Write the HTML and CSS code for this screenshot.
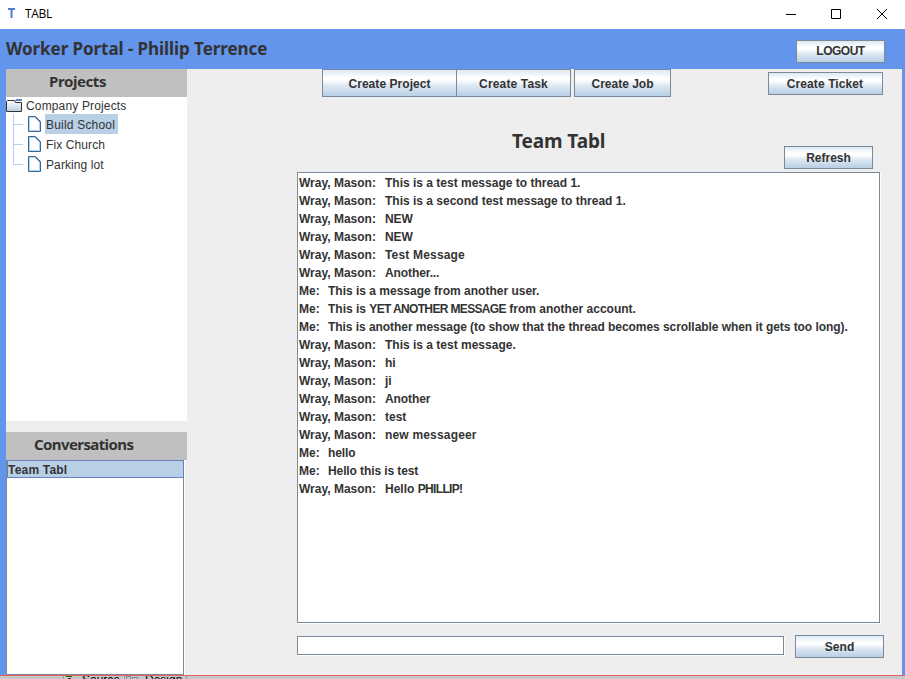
FILE: index.html
```html
<!DOCTYPE html>
<html lang="en">
<head>
<meta charset="utf-8">
<title>TABL</title>
<link rel="stylesheet" href="styles.css">
</head>
<body>
<div class="titlebar">
  <svg class="app-icon" width="8" height="11" viewBox="0 0 8 11"><path d="M0 1h7M3.500 1v9" stroke="#4f7ed0" stroke-width="2"/></svg>
  <span class="app-name">TABL</span>
  <svg class="window-controls" width="104" height="12" viewBox="0 0 104 12" fill="none" stroke="#000"><path d="M2 6.500h10M47.500 1.500h9v9h-9zM93 1l10 10M103 1l-10 10"/></svg>
</div>
<div class="window">
  <header class="header"><h1><span>Worker Portal - Phillip Terrence</span></h1><button class="btn logout">LOGOUT</button></header>
  <div class="body">
    <aside class="sidebar">
      <h2 class="projects-title"><span>Projects</span></h2>
      <div class="tree">
        <div class="root"><svg width="17" height="13" viewBox="0 0 17 13"><defs><linearGradient id="fold" x2="0" y2="1"><stop stop-color="#fff"/><stop offset="1" stop-color="#b8cfe5"/></linearGradient></defs><path d="M.5 12.500V2.500l1-1h7l1 2h6v9z" fill="url(#fold)" stroke="#333"/><path d="M10 0h6v2H9z" fill="#6382bf"/></svg><span>Company Projects</span></div>
        <div class="leaf selected"><i></i><svg width="13" height="16" viewBox="0 0 13 16"><use href="#page"/></svg><span>Build School</span></div>
        <div class="leaf"><i></i><svg width="13" height="16" viewBox="0 0 13 16"><use href="#page"/></svg><span>Fix Church</span></div>
        <div class="leaf last"><i></i><svg width="13" height="16" viewBox="0 0 13 16"><defs><g id="page"><path d="M.5.500h7l5 5v10H.5z" fill="#fff" stroke="#336699"/><path d="M1.500 14.500V1.500h5M1.500 14.500h10V6" fill="none" stroke="#b8cfe5"/><path d="M7.500 1v1h1v1h1v1h1v1h1v1" fill="none" stroke="#6382bf"/></g></defs><use href="#page"/></svg><span>Parking lot</span></div>
      </div>
      <h2 class="conv-title"><span>Conversations</span></h2>
      <div class="conv-list"><div class="conv">Team Tabl</div></div>
    </aside>
    <main class="main">
      <nav class="toolbar"><button class="btn project">Create Project</button><button class="btn task">Create Task</button><button class="btn job">Create Job</button><button class="btn ticket">Create Ticket</button></nav>
      <div class="thread-head"><h3><span>Team Tabl</span></h3><button class="btn refresh">Refresh</button></div>
      <div class="thread">
        <p><b>Wray, Mason:</b><span>This is a test message to thread 1.</span></p>
        <p><b>Wray, Mason:</b><span>This is a second test message to thread 1.</span></p>
        <p><b>Wray, Mason:</b><span class="tight">NEW</span></p>
        <p><b>Wray, Mason:</b><span class="tight">NEW</span></p>
        <p><b>Wray, Mason:</b><span class="loose">Test Message</span></p>
        <p><b>Wray, Mason:</b><span class="tight">Another...</span></p>
        <p class="me"><b>Me:</b><span>This is a message from another user.</span></p>
        <p class="me"><b>Me:</b><span>This is <span class="caps">YET ANOTHER MESSAGE</span> from another account.</span></p>
        <p class="me"><b>Me:</b><span class="long">This is another message (to show that the thread becomes scrollable when it gets too long).</span></p>
        <p><b>Wray, Mason:</b><span>This is a test message.</span></p>
        <p><b>Wray, Mason:</b><span>hi</span></p>
        <p><b>Wray, Mason:</b><span>ji</span></p>
        <p><b>Wray, Mason:</b><span class="tight">Another</span></p>
        <p><b>Wray, Mason:</b><span>test</span></p>
        <p><b>Wray, Mason:</b><span class="loose">new messageer</span></p>
        <p class="me"><b>Me:</b><span class="tight">hello</span></p>
        <p class="me"><b>Me:</b><span class="tight">Hello this is test</span></p>
        <p><b>Wray, Mason:</b><span>Hello <span class="caps">PHILLIP!</span></span></p>
      </div>
      <form class="composer"><input type="text" aria-label="Message"><button class="btn send" type="button">Send</button></form>
    </main>
  </div>
</div>
<footer class="behind"><span class="tab"><svg width="8" height="3" viewBox="0 0 8 3"><path d="M1 0h6v1H1z" fill="#070"/><path d="M3 2h3v1H3z" fill="#b00"/></svg>Source</span><span class="tab design"><svg width="12" height="3" viewBox="0 0 12 3"><path d="M.5 3V.5h4V3M6.500 3V1.500h5V3" fill="none" stroke="#6f8ba8"/></svg>Design</span></footer>
</body>
</html>
```

FILE: styles.css
```css
* { box-sizing: border-box; }
body { margin: 0; width: 905px; height: 679px; overflow: hidden; display: flex; flex-direction: column; background: #fff; color: #333; font: 12px "Liberation Sans", Arial, sans-serif; }
h1, h2, h3, p { margin: 0; white-space: nowrap; }
.titlebar { height: 29px; flex: none; display: flex; align-items: center; padding: 0 17px 2px 8px; color: #000; }
.app-name { font: 12px "Open Sans", sans-serif; margin-left: 9px; letter-spacing: -.35px; }
.window-controls { margin-left: auto; flex: none; }
.window { height: 646px; flex: none; background: #6495ed; padding: 0 3px 0 6px; }
.header { height: 40px; display: flex; justify-content: space-between; padding: 11px 17px 0 0; }
h1, h2, h3 { font-family: "Noto Sans", "Open Sans", sans-serif; font-weight: bold; }
h1 { font-size: 17px; line-height: 20px; margin-top: -1px; letter-spacing: -.07px; }
.btn { font: bold 12px "Liberation Sans", Arial, sans-serif; color: #333; height: 23px; padding: 0; border: 1px solid #7a8a99; border-radius: 0; background: linear-gradient(#dde8f3 0, #fff 30%, #fff 38%, #dde8f3 60%, #b8cfe5 100%); }
.logout { width: 89px; letter-spacing: -.5px; padding-bottom: 1px; }
.body { display: flex; height: 606px; background: #eee; }
.sidebar { width: 181px; display: flex; flex-direction: column; }
h2 { height: 28px; background: silver; font-size: 15px; line-height: 25px; flex: none; letter-spacing: -.4px; }
.projects-title { padding-left: 43px; }
.tree { height: 324px; background: #fff; flex: none; letter-spacing: .15px; }
.root { height: 17px; display: flex; align-items: center; }
.root svg { margin-top: -1px; }
.root span { margin-left: 3px; }
.leaf { height: 20px; display: flex; align-items: center; position: relative; padding-left: 22px; }
.leaf svg { margin-right: 4px; }
.leaf span { padding: 0 3px 0 1px; height: 20px; line-height: 22px; letter-spacing: .1px; }
.leaf.selected span { background: #b8cfe5; letter-spacing: .2px; }
.leaf i { position: absolute; left: 7px; top: 0; width: 10px; height: 11px; border-left: 1px solid #b8cfe5; border-bottom: 1px solid #b8cfe5; }
.leaf:not(.last)::before { content: ""; position: absolute; left: 7px; top: 0; height: 20px; border-left: 1px solid #b8cfe5; }
.conv-title { margin-top: 11px; padding-left: 28px; letter-spacing: -.6px; }
.conv-list { width: 178px; height: 215px; background: #fff; border: 1px solid #7a8a99; box-shadow: 1px 0 #fff; }
.conv { height: 18px; margin: -1px -1px 0 0; border: 1px solid #6382bf; background: #b8cfe5; font-weight: bold; line-height: 18px; letter-spacing: .2px; }
.main { width: 715px; padding-left: 110px; }
.toolbar { display: flex; height: 28px; padding-left: 25px; }
.toolbar .btn { height: 28px; padding-top: 1px; }
.project { width: 135px; letter-spacing: .05px; }
.task { width: 115px; margin-left: -1px; letter-spacing: .15px; }
.job { width: 97px; margin-left: 3px; }
.toolbar .ticket { width: 115px; height: 23px; margin: 3px 0 0 97px; padding: 0 1px 0 0; letter-spacing: .1px; }
.thread-head { height: 75px; display: flex; justify-content: space-between; align-items: flex-end; padding: 0 29px 3px 215px; }
h3 { font-size: 19px; line-height: 24px; align-self: flex-start; margin-top: 32px; letter-spacing: -.1px; }
.refresh { width: 89px; }
.thread { width: 583px; height: 451px; border: 1px solid #7a8a99; background: #fff; padding: 1px 1px; box-shadow: 1px 1px #fff; font-weight: bold; }
.thread p { display: flex; height: 18px; line-height: 18px; }
.thread b { width: 86px; flex: none; }
.thread .me b { width: 29px; }
.caps { letter-spacing: -.65px; }
.loose { letter-spacing: .18px; }
.long { letter-spacing: -.055px; }
.tight { letter-spacing: -.1px; }
.composer { display: flex; margin-top: 12px; align-items: flex-start; }
.composer input { width: 487px; height: 19px; margin: 1px 11px 0 0; border: 1px solid #7a8a99; background: #fff; padding: 0 2px; box-shadow: 1px 1px #fff; }
.send { width: 89px; letter-spacing: .1px; }
.behind { height: 4px; flex: none; overflow: hidden; display: flex; align-items: flex-start; background: #c6c7ca; border-top: 1px solid #e8615a; padding-left: 63px; color: #000; line-height: 8px; font-size: 12px; }
.tab { display: flex; gap: 9px; align-items: flex-start; padding: 0 4px 0 1px; border-left: 1px solid #99a; height: 10px; }
.design { border-right: 1px solid #99a; gap: 7px; }
.tab svg { flex: none; }
```
